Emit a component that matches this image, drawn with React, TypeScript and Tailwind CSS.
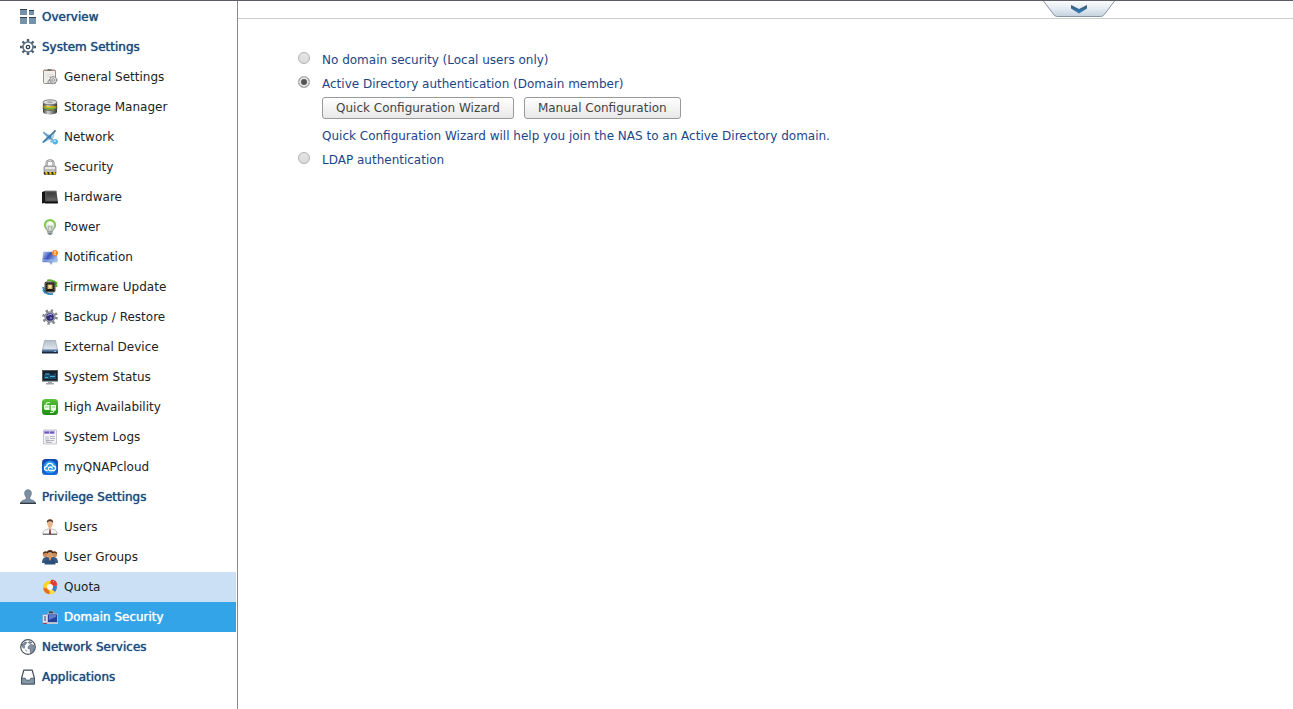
import React, { useState } from 'react';
import clsx from 'clsx';

interface MenuItem {
  id: string;
  label: string;
  icon: React.ReactNode;
  top?: boolean;
}

const Icon = ({ children }: { children: React.ReactNode }) => (
  <svg viewBox="0 0 16 16" className="w-4 h-4 shrink-0" aria-hidden="true">
    {children}
  </svg>
);

const OverviewIcon = () => (
  <Icon>
    <path fill="#7592a9" d="M0 0h7v6H0zM9 1h5v5H9zM0 8h7v7H0zM9 8h7v7H9z" />
    <path fill="#33424f" d="M0 0h7v1H0zM9 1h5v1H9zM0 8h7v1H0zM9 8h7v1H9z" />
  </Icon>
);

const SystemSettingsIcon = () => (
  <Icon>
    <g stroke="#4b5c6c" strokeWidth="2.4">
      <path d="M8 0v16M0 8h16" />
      <path d="M2.500 2.500l11 11M13.500 2.500l-11 11" />
    </g>
    <circle cx="8" cy="8" r="5" fill="#fff" stroke="#62788b" strokeWidth="1.600" />
    <circle cx="8" cy="8" r="1.700" fill="#fff" stroke="#2c3e50" strokeWidth="1.300" />
  </Icon>
);

const GeneralIcon = () => (
  <Icon>
    <rect x="1.500" y="1" width="12" height="13.500" rx="1" fill="#efeeeb" stroke="#96918c" />
    <path fill="#b08a72" d="M2 1h11v1H2z" />
    <path fill="#777" d="M5.500 0h4v2h-4z" />
    <path stroke="#dddbd7" d="M4 5.500h7M4 7.500h5" />
    <circle cx="11.200" cy="11" r="3.500" fill="#e2e2e2" stroke="#8b8b8b" strokeWidth="1.500" strokeDasharray="1.700 .8" />
    <circle cx="11.200" cy="11" r="1.300" fill="#fff" stroke="#777" strokeWidth=".8" />
    <circle cx="7.500" cy="13" r="1.600" fill="#ddd" stroke="#888" />
  </Icon>
);

const StorageIcon = () => (
  <Icon>
    <defs>
      <linearGradient id="drum">
        <stop offset="0" stopColor="#3d3d3d" />
        <stop offset=".35" stopColor="#cfcfcf" />
        <stop offset="1" stopColor="#333" />
      </linearGradient>
      <linearGradient id="band">
        <stop offset="0" stopColor="#8a4f12" />
        <stop offset=".3" stopColor="#f9d820" />
        <stop offset=".75" stopColor="#e3b41b" />
        <stop offset="1" stopColor="#5a3d16" />
      </linearGradient>
    </defs>
    <path fill="url(#drum)" d="M1 3.500v9.500c0 3.300 14 3.300 14 0V3.500z" />
    <path fill="url(#band)" d="M.8 5.500c1 2.500 13.400 2.500 14.400 0v4.500c-1 2.500-13.400 2.500-14.400 0z" />
    <path fill="none" stroke="#6faf35" strokeWidth="1.300" d="M2 8c1.500 1.800 10.500 1.800 12 0" />
    <path fill="none" stroke="#2b5574" strokeWidth="1.100" d="M1 9.500c1.500 2.200 12.500 2.200 14 0" />
    <ellipse cx="8" cy="3.300" rx="7" ry="2.500" fill="#dedede" stroke="#666" strokeWidth=".8" />
    <ellipse cx="8" cy="3.300" rx="3" ry="1" fill="#aaa" />
  </Icon>
);

const NetworkIcon = () => (
  <Icon>
    <path fill="#b3d6ec" stroke="#70a8cc" strokeWidth=".6" d="M1 3l8 4 4-6-2 8-10.500 4.500L5 8z" />
    <path stroke="#39769f" strokeWidth="1.700" d="M1 13.500L13.500 1.500" />
    <path stroke="#5795bd" strokeWidth="1.200" d="M1.500 3.500l9.500 8" />
    <circle cx="7.500" cy="8" r="1.800" fill="#3c7fae" />
    <circle cx="13.200" cy="12.800" r="2.700" fill="#56b2e5" />
    <circle cx="12.800" cy="12" r="1.100" fill="#c9ecff" />
    <circle cx="9.500" cy="12.500" r="1.300" fill="#72bce6" />
  </Icon>
);

const SecurityIcon = () => (
  <Icon>
    <path fill="none" stroke="#8e8e8e" strokeWidth="2.200" d="M4.500 8V4.500c0-4.300 7-4.300 7 0V8" />
    <path fill="none" stroke="#e3e3e3" strokeWidth=".8" d="M4.300 8V4.500c0-4 7.300-4 7.300 0V8" />
    <rect x="2" y="7" width="12" height="8.500" rx="1" fill="#bcbcbc" stroke="#777" strokeWidth=".7" />
    <path fill="#e7e7e7" d="M3 8h10v2H3z" />
    <path fill="#2c2a20" d="M2 13h12v2.500H2z" />
    <path fill="#f4c713" d="M3 13h2l1 2.500H4zM7 13h2l1 2.500H8zM11 13h2l1 2.500h-2z" />
  </Icon>
);

const HardwareIcon = () => (
  <Icon>
    <defs>
      <linearGradient id="case" x2="0" y2="1">
        <stop offset="0" stopColor="#3a3a3a" />
        <stop offset="1" stopColor="#666" />
      </linearGradient>
    </defs>
    <path fill="#161616" d="M0 3l3-1V14l-3 .5z" />
    <path fill="#505050" d="M3 2h11.500l1.500 12H3z" />
    <path fill="url(#case)" d="M5 3.500h8.500l.8 8H5z" />
    <path fill="#909090" d="M3 1.500h11.500v.8H3z" />
    <path fill="#111" d="M3 12.500h12.800v2H3z" />
  </Icon>
);

const PowerIcon = () => (
  <Icon>
    <path fill="#7fcb48" d="M1.800 6a6.200 6 0 0 1 12.400 0c0 3.200-3.200 4-3.500 6.500H5.300C5 10 1.800 9.200 1.800 6z" />
    <path fill="#dfe6dc" d="M3.700 6.200a4.300 4.300 0 0 1 8.600 0c0 2.600-2.300 3.600-2.700 6.300H6.400C6 9.800 3.700 8.800 3.700 6.200z" />
    <path fill="#a9b1aa" d="M2.500 8.500L5.500 13h1L4.500 8zM13.500 8.500L10.500 13h-1l2-5z" />
    <path fill="#fff" d="M5 5.500c0-3.200 6-3.200 6 0z" />
    <path fill="none" stroke="#9aa59a" strokeWidth=".8" d="M6 7l1.200 5.500M10 7l-1.200 5.500M6 7l2 1 2-1" />
    <path fill="#848a8c" d="M5.500 12h5v2.500L9 16H7l-1.500-1.500z" />
    <path fill="#c9cdce" d="M6 12.700h4v.8H6z" />
  </Icon>
);

const NotificationIcon = () => (
  <Icon>
    <defs>
      <linearGradient id="bubble" x2="1" y2=".6">
        <stop offset="0" stopColor="#c3d8f5" />
        <stop offset=".45" stopColor="#3b50ba" />
        <stop offset="1" stopColor="#b5d0f3" />
      </linearGradient>
    </defs>
    <path fill="url(#bubble)" stroke="#8ba3d6" strokeWidth=".6" d="M1.500 3h13l.9 9c0 .8-.5 1-1 1H10.500L9 15.500 7.500 13H1.500c-.7 0-1.100-.4-1-1z" />
    <path fill="#9dbdec" opacity=".7" d="M1 10.500h14v2H1z" />
    <circle cx="13" cy="4" r="3" fill="#f58a1d" />
    <path fill="#fff" d="M12.500 2h1v2.500h-1zM12.500 5h1v1h-1z" />
  </Icon>
);

const FirmwareIcon = () => (
  <Icon>
    <path fill="none" stroke="#5cb42c" strokeWidth="1.800" d="M5 1.500c4.500-1.300 9 1 9.700 6.500" />
    <path fill="#5cb42c" d="M12 1l4 3-2.500 2z" />
    <path fill="none" stroke="#2787c8" strokeWidth="1.800" d="M11 14.800C6 16 1.600 13.500 1.200 8" />
    <path fill="#2787c8" d="M0 11l4 1.500-1 2.500z" />
    <rect x="2.500" y="2.500" width="11" height="11" rx="2" fill="#4a4840" />
    <rect x="4" y="4" width="8" height="8.500" fill="#191815" stroke="#85806b" strokeWidth=".6" strokeDasharray="1 1" />
    <rect x="5.500" y="5.500" width="5" height="4.500" fill="#d7ba77" />
    <rect x="7" y="6.500" width="2" height="2" fill="#fff0bb" />
  </Icon>
);

const BackupIcon = () => (
  <Icon>
    <circle cx="8" cy="8" r="6.500" fill="none" stroke="#85888e" strokeWidth="2.600" strokeDasharray="2.300 2.800" />
    <circle cx="8" cy="8" r="5.200" fill="#a7abb2" stroke="#73777f" strokeWidth=".8" />
    <circle cx="8" cy="8" r="3.800" fill="#2f2c72" />
    <path fill="none" stroke="#a7a3e7" strokeWidth="1.100" d="M5.500 7c1-2 3-2.300 4.500-.8" />
    <circle cx="9" cy="9" r="1.200" fill="#7470c4" />
  </Icon>
);

const ExternalIcon = () => (
  <Icon>
    <defs>
      <linearGradient id="drive" x2="0" y2="1">
        <stop offset="0" stopColor="#b4c0cc" />
        <stop offset="1" stopColor="#e2e9f0" />
      </linearGradient>
    </defs>
    <path fill="url(#drive)" stroke="#8e9aa8" strokeWidth=".6" d="M2.500 1.500h11l2 9.500H.5z" />
    <path fill="#3e5a80" d="M0 10.500h16V14H0z" />
    <path fill="#a9c3e2" d="M0 10.500h16v.8H0z" />
    <path fill="#17283f" d="M0 13h16v1.500H0z" />
    <path fill="#7ec4ff" d="M12 12h2v1h-2z" />
  </Icon>
);

const StatusIcon = () => (
  <Icon>
    <rect x=".5" y="1.500" width="15" height="10.500" fill="#16202c" stroke="#56585d" />
    <path fill="#1c4b6c" d="M2 6l5-2 3 2 4-2v6H2z" />
    <path fill="none" stroke="#3cb0d7" d="M3 5h4M8 7.500h5M3 8.500h3" />
    <path fill="#9ea3a8" d="M0 12h16v1H0zM6 13h4v1.500H6z" />
    <path fill="#a3a6aa" d="M4 14h8v1.500H4z" />
  </Icon>
);

const AvailabilityIcon = () => (
  <Icon>
    <defs>
      <linearGradient id="ha" x2="0" y2="1">
        <stop offset="0" stopColor="#5bc437" />
        <stop offset="1" stopColor="#1d8d11" />
      </linearGradient>
    </defs>
    <rect width="16" height="16" rx="3.500" fill="url(#ha)" />
    <path fill="#eaffe5" d="M2 6h5.500v5H3.500L2 10zM8.700 6H14v5l-1 .8H8.700z" />
    <path fill="none" stroke="#eaffe5" strokeWidth="1.200" d="M4 6c0-2.500 1.500-2.500 4-2.500M8 13.500c2.500 0 4 0 4-2.500" />
    <path stroke="#6cc955" strokeWidth=".8" d="M3 8h3.500M10 8h3" />
  </Icon>
);

const LogsIcon = () => (
  <Icon>
    <path fill="#f4f4f7" stroke="#b9b9c3" strokeWidth=".8" d="M1.500 1h13v14h-13z" />
    <path fill="#c7bde9" d="M1 1.500h12v3.500H1z" />
    <path stroke="#6f56bd" strokeWidth="1.800" d="M2.500 3.500H7M8 3.500h4" />
    <path fill="#d6d6df" d="M3 7h4v6H3z" />
    <path stroke="#a5a5b4" strokeWidth=".8" d="M8 7.500h5M8 9.500h5M4 11.500h8M4 13.500h6" />
  </Icon>
);

const CloudIcon = () => (
  <Icon>
    <defs>
      <linearGradient id="cloud" x2="0" y2="1">
        <stop offset="0" stopColor="#1746a8" />
        <stop offset="1" stopColor="#1769dd" />
      </linearGradient>
    </defs>
    <rect width="16" height="16" rx="3.500" fill="url(#cloud)" />
    <circle cx="8" cy="8" r="6.300" fill="#2699ee" />
    <path fill="none" stroke="#fff" strokeWidth="1.300" strokeLinecap="round" d="M5 11.500C1.500 11.500 2 7.500 4.700 7.500 5 3.500 10.500 3.500 11 7c3.500.2 3.300 4.500.3 4.500H8C5.500 11.500 6 8 8.300 8c1 0 1.500.5 2 1.200" />
  </Icon>
);

const PrivilegeIcon = () => (
  <Icon>
    <path fill="#7c8fa1" stroke="#5b6c7c" strokeWidth=".7" d="M8 .8c2.200 0 3.500 1.400 3.300 3.700-.1 1.700-.8 3-1.500 3.800v1.700c1.500 1.500 5.700 1.200 5.700 4.500H.5c0-3.300 4.200-3 5.700-4.500V8.300C5.500 7.500 4.800 6.200 4.700 4.500 4.500 2.200 5.800.8 8 .8z" />
    <path fill="#2c3946" d="M0 13.700h16V15H0z" />
  </Icon>
);

const UsersIcon = () => (
  <Icon>
    <path fill="#f5f5f5" stroke="#a9a9a9" strokeWidth=".7" d="M.8 15c0-3.500 2.500-4.500 5.200-5h4c2.700.5 5.200 1.500 5.200 5z" />
    <path fill="#e7b68c" d="M5.300 3h5.400c.4 3-.7 5-1.700 5.800V10L8 11.500 7 10V8.800C6 8 4.900 6 5.300 3z" />
    <path fill="#5d341d" d="M5 4C4.300 1.500 6 .3 8 .3s3.700 1.200 3 3.700C10.500 2.500 9 2.500 8 2.500S5.500 2.500 5 4z" />
    <path fill="#8a2731" d="M7.400 10.500h1.200L9 15H7z" />
    <path stroke="#333" strokeWidth=".8" d="M1 15.300h14" />
  </Icon>
);

const GroupsIcon = () => (
  <Icon>
    <path fill="#365a84" d="M0 14c0-4 1.500-5.500 4-6h8c2.500.5 4 2 4 6z" />
    <circle cx="3.500" cy="5.500" r="2.700" fill="#c98c5a" />
    <circle cx="12.500" cy="5.500" r="2.700" fill="#c98c5a" />
    <path fill="#5b3519" d="M.8 5C.8 1.500 5.500 1.500 6.200 4.500 4.500 3.800 2.500 3.800.8 5zM9.800 4.500C10.500 1.500 15.200 1.500 15.200 5c-1.700-1.200-3.700-1.200-5.400-.5z" />
    <path fill="#2c4f79" d="M2.500 15.500c0-4 2-5 4-5.500h3c2 .5 4 1.500 4 5.500z" />
    <path fill="#d99b67" d="M5.300 4h5.400c.3 3-1 4.500-1.700 5.300v1L8 12l-1-1.700v-1C6.300 8.500 5 7 5.300 4z" />
    <path fill="#4a2813" d="M5 4.500C4.500 2 6 1 8 1s3.500 1 3 3.500c-1-1.500-5-1.500-6 0z" />
  </Icon>
);

const QuotaIcon = () => (
  <Icon>
    <circle cx="8" cy="8.500" r="6.800" fill="#f5a623" />
    <path fill="#f7d52c" d="M8 1.700A6.800 6.800 0 0 0 1.200 8.500L5 9l2-4z" />
    <path fill="#f6e04b" d="M6 12l2 3.300c3 0 4.500-1.500 5-2.300l-3-3z" />
    <path fill="#e8701c" d="M1.300 9.500c.4 3 2.700 5.300 5.700 5.800L8 13 4.500 9z" />
    <path fill="#3a7ed0" d="M10.500 7h4.300c.3 2.500-.6 4.500-1.800 5.800L10 10.500z" />
    <path fill="#e23a34" d="M9 1c3.500-.7 6 1.500 6.300 5.500l-4.300.5L8.500 4z" />
    <path fill="#f9a59c" d="M11 2h1v1h-1z" />
    <circle cx="8" cy="8" r="3" fill="#fdfdf5" />
  </Icon>
);

const DomainIcon = () => (
  <Icon>
    <path fill="#8aa0b5" d="M5 2l2.500 1L10.500 1l2 2-1 2.500h-5z" />
    <path fill="#33405c" d="M7 2.500h4v2H7z" />
    <path fill="#d9e2ee" stroke="#7e8fa8" strokeWidth=".6" d="M.5 5.500h6V14h-6z" />
    <path fill="#27409a" stroke="#c6d0e4" strokeWidth=".7" d="M5.500 5h10v8.500h-10z" />
    <path fill="#5e7bd0" d="M7 6h7v2L7 11z" />
    <path fill="#8592a8" d="M2 7h2v5H2z" />
    <path fill="#c3c9d3" d="M5 13.500h11V15H5z" />
    <path fill="#a74560" d="M1 14h4v1H1z" />
  </Icon>
);

const ServicesIcon = () => (
  <Icon>
    <circle cx="8" cy="8" r="7.300" fill="#fff" stroke="#4b5660" strokeWidth="1.200" />
    <path fill="#8093a4" stroke="#3f4b56" strokeWidth=".5" d="M2 5.500L5 3l2 .5L5.500 5.500 4 6l.8 1.500L4 9.500 2 7.500z" />
    <path fill="#8093a4" stroke="#3f4b56" strokeWidth=".5" d="M8.500 7l2-1.500 3 .5 1 2.500-1 3.500-2.500 2.500-1-2.500.5-2-2.500-.5zM9 2.500l3 1-1.500 1L8.500 4z" />
    <path fill="#55636f" d="M5 10.500l1.500.5v2z" />
  </Icon>
);

const ApplicationsIcon = () => (
  <Icon>
    <path fill="#fff" stroke="#3f4b58" strokeWidth="1.200" strokeLinejoin="round" d="M3.800 1.200h8.400l2.200 8V15H1.600V9.200z" />
    <path fill="#8496a8" stroke="#3f4b58" strokeWidth=".8" d="M1.600 9.200h3.600l1 2h3.600l1-2h3.600V15H1.600z" />
  </Icon>
);

const MENU: MenuItem[] = [
  { id: 'overview', label: 'Overview', icon: <OverviewIcon />, top: true },
  { id: 'system', label: 'System Settings', icon: <SystemSettingsIcon />, top: true },
  { id: 'general', label: 'General Settings', icon: <GeneralIcon /> },
  { id: 'storage', label: 'Storage Manager', icon: <StorageIcon /> },
  { id: 'network', label: 'Network', icon: <NetworkIcon /> },
  { id: 'security', label: 'Security', icon: <SecurityIcon /> },
  { id: 'hardware', label: 'Hardware', icon: <HardwareIcon /> },
  { id: 'power', label: 'Power', icon: <PowerIcon /> },
  { id: 'notification', label: 'Notification', icon: <NotificationIcon /> },
  { id: 'firmware', label: 'Firmware Update', icon: <FirmwareIcon /> },
  { id: 'backup', label: 'Backup / Restore', icon: <BackupIcon /> },
  { id: 'external', label: 'External Device', icon: <ExternalIcon /> },
  { id: 'status', label: 'System Status', icon: <StatusIcon /> },
  { id: 'ha', label: 'High Availability', icon: <AvailabilityIcon /> },
  { id: 'logs', label: 'System Logs', icon: <LogsIcon /> },
  { id: 'cloud', label: 'myQNAPcloud', icon: <CloudIcon /> },
  { id: 'privilege', label: 'Privilege Settings', icon: <PrivilegeIcon />, top: true },
  { id: 'users', label: 'Users', icon: <UsersIcon /> },
  { id: 'groups', label: 'User Groups', icon: <GroupsIcon /> },
  { id: 'quota', label: 'Quota', icon: <QuotaIcon /> },
  { id: 'domain', label: 'Domain Security', icon: <DomainIcon /> },
  { id: 'services', label: 'Network Services', icon: <ServicesIcon />, top: true },
  { id: 'applications', label: 'Applications', icon: <ApplicationsIcon />, top: true },
];

function Sidebar() {
  const [active, setActive] = useState('domain');
  const [hovered, setHovered] = useState('quota');

  return (
    <nav className="w-[238px] shrink-0 border-r border-[#8c8c8c] pt-px pr-px">
      <ul>
        {MENU.map((item) => (
          <li key={item.id}>
            <a
              href={`#${item.id}`}
              onClick={() => setActive(item.id)}
              onMouseEnter={() => setHovered(item.id)}
              className={clsx(
                'flex items-center gap-1.5 h-[30px]',
                item.top ? 'pl-5' : 'pl-[42px]',
                active === item.id
                  ? 'bg-[#33a4e8] text-white [text-shadow:0_0_1px]'
                  : item.top
                    ? 'text-[#1c4a7c] [text-shadow:0_0_1px]'
                    : 'text-[#222]',
                hovered === item.id && active !== item.id && 'bg-[#cce0f5]'
              )}
            >
              {item.icon}
              <span className="whitespace-nowrap">{item.label}</span>
            </a>
          </li>
        ))}
      </ul>
    </nav>
  );
}

interface RadioRowProps {
  id: string;
  label: string;
  value: string;
  onSelect: (id: string) => void;
}

function RadioRow({ id, label, value, onSelect }: RadioRowProps) {
  return (
    <label className="flex items-center h-6">
      <span className="flex items-start w-6 h-4 shrink-0">
        <input
          type="radio"
          name="domain-security"
          checked={value === id}
          onChange={() => onSelect(id)}
          className="appearance-none w-3 h-3 rounded-full border border-[#b0b0b0] bg-linear-to-b from-[#e6e6e6] to-[#dadada] checked:bg-none checked:bg-[#555] checked:shadow-[inset_0_0_0_2px_#e6e6e6]"
        />
      </span>
      {label}
    </label>
  );
}

const buttonClass =
  'h-[22px] px-[13px] rounded-[3px] border border-[#999] bg-linear-to-b from-white to-[#e8e8e8] text-[#444] whitespace-nowrap';

export default function App() {
  const [mode, setMode] = useState('ad');

  return (
    <div className="flex min-h-screen bg-white border-t border-[#5c5c66] font-['DejaVu_Sans',Verdana,sans-serif] text-xs">
      <Sidebar />
      <main className="flex-1 min-w-0">
        <div className="flex justify-end h-[18px] border-b border-[#ccc] pr-[178px]">
          <button type="button" aria-label="Expand header" className="w-[72px] h-[17px]">
            <svg viewBox="0 0 72 17" className="w-full h-full" aria-hidden="true">
              <defs>
                <linearGradient id="tab" x2="0" y2="1">
                  <stop offset="0" stopColor="#fafbfc" />
                  <stop offset=".5" stopColor="#e4ebf2" />
                  <stop offset="1" stopColor="#c3d1de" />
                </linearGradient>
                <linearGradient id="chevron" x2="0" y2="1">
                  <stop offset="0" stopColor="#3f576e" />
                  <stop offset="1" stopColor="#2f82c3" />
                </linearGradient>
              </defs>
              <path fill="url(#tab)" stroke="#8795a3" d="M.5 0l9 12c1.500 2.500 3 3.500 5 3.500h43c2 0 3.500-1 5-3.500l9-12" />
              <path fill="url(#chevron)" d="M28 4l8 4 8-4v3.500l-8 5-8-5z" />
            </svg>
          </button>
        </div>

        <div className="pt-[29px] pl-[60px] text-[#1c4587]">
          <RadioRow id="none" label="No domain security (Local users only)" value={mode} onSelect={setMode} />
          <RadioRow id="ad" label="Active Directory authentication (Domain member)" value={mode} onSelect={setMode} />
          <div className="flex items-center gap-2.5 h-6 pl-6">
            <button type="button" className={buttonClass}>Quick Configuration Wizard</button>
            <button type="button" className={buttonClass}>Manual Configuration</button>
          </div>
          <p className="flex items-center h-7 pl-6 pt-1">
            Quick Configuration Wizard will help you join the NAS to an Active Directory domain.
          </p>
          <RadioRow id="ldap" label="LDAP authentication" value={mode} onSelect={setMode} />
        </div>
      </main>
    </div>
  );
}
